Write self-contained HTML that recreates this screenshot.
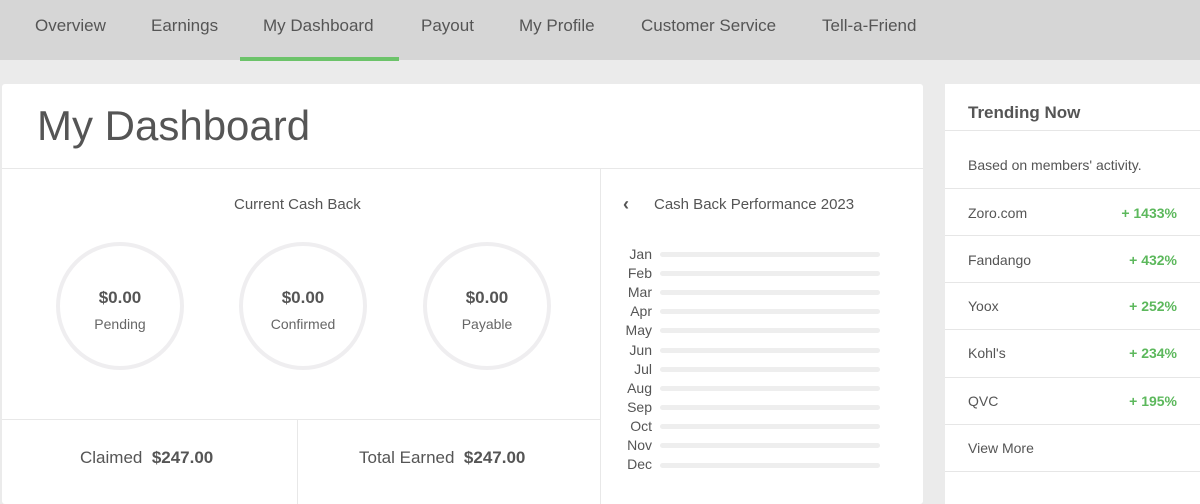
<!DOCTYPE html>
<html><head><style>
*{margin:0;padding:0;box-sizing:border-box}
body{width:1200px;height:490px;overflow:hidden;background:#ebebeb;font-family:"Liberation Sans",sans-serif;color:#555;position:relative}
.nav{position:absolute;left:0;top:0;width:1200px;height:60px;background:#d6d6d6}
.nav span{position:absolute;top:16px;font-size:17px;color:#555}
.ul{position:absolute;left:240px;top:57px;width:159px;height:4px;background:#6cc36a}
.card{position:absolute;left:2px;top:84px;width:921px;height:420px;background:#fff;border-radius:3px}
.abs{position:absolute}
.circ{position:absolute;width:128px;height:128px;border:4px solid #efeef0;border-radius:50%;text-align:center}
.circ b{display:block;margin-top:42px;font-size:17px;color:#555}
.circ i{display:block;font-style:normal;font-size:14px;margin-top:8px;color:#666}
.m{position:absolute;left:610px;width:42px;text-align:right;font-size:14px;color:#555}
.bar{position:absolute;left:660px;width:220px;height:5px;background:#eeeeee;border-radius:3px}
.side{position:absolute;left:945px;top:84px;width:260px;height:420px;background:#fff}
.row{position:absolute;left:23px;font-size:14px;color:#555}
.pct{position:absolute;right:28px;font-size:14px;color:#5cb85c;font-weight:bold}
.hl{position:absolute;left:0;width:260px;height:1px;background:#e6e6e6}
</style></head><body>
<div class="nav">
<span style="left:35px">Overview</span><span style="left:151px">Earnings</span><span style="left:263px">My Dashboard</span><span style="left:421px">Payout</span><span style="left:519px">My Profile</span><span style="left:641px">Customer Service</span><span style="left:822px">Tell-a-Friend</span>
</div>
<div class="ul"></div>
<div class="card">
<div class="abs" style="left:35px;top:18px;font-size:42px;color:#555">My Dashboard</div>
<div class="abs" style="left:0;top:84px;width:921px;height:1px;background:#e8e8e8"></div>
<div class="abs" style="left:598px;top:85px;width:1px;height:335px;background:#e8e8e8"></div>
<div class="abs" style="left:0;top:335px;width:598px;height:1px;background:#e8e8e8"></div>
<div class="abs" style="left:295px;top:336px;width:1px;height:84px;background:#e8e8e8"></div>
<div class="abs" style="left:232px;top:112px;font-size:15px;color:#555">Current Cash Back</div>
<div class="circ" style="left:54px;top:158px"><b>$0.00</b><i>Pending</i></div>
<div class="circ" style="left:237px;top:158px"><b>$0.00</b><i>Confirmed</i></div>
<div class="circ" style="left:421px;top:158px"><b>$0.00</b><i>Payable</i></div>
<div class="abs" style="left:78px;top:364px;font-size:17px;color:#555">Claimed&nbsp; <b>$247.00</b></div>
<div class="abs" style="left:357px;top:364px;font-size:17px;color:#555">Total Earned&nbsp; <b>$247.00</b></div>
<div class="abs" style="left:621px;top:110px;font-size:18px;font-weight:bold;color:#555">‹</div>
<div class="abs" style="left:652px;top:112px;font-size:15px;color:#555">Cash Back Performance 2023</div>
</div>
<div class="m" style="top:246px">Jan</div><div class="bar" style="top:252px"></div>
<div class="m" style="top:265px">Feb</div><div class="bar" style="top:271px"></div>
<div class="m" style="top:284px">Mar</div><div class="bar" style="top:290px"></div>
<div class="m" style="top:303px">Apr</div><div class="bar" style="top:309px"></div>
<div class="m" style="top:322px">May</div><div class="bar" style="top:328px"></div>
<div class="m" style="top:342px">Jun</div><div class="bar" style="top:348px"></div>
<div class="m" style="top:361px">Jul</div><div class="bar" style="top:367px"></div>
<div class="m" style="top:380px">Aug</div><div class="bar" style="top:386px"></div>
<div class="m" style="top:399px">Sep</div><div class="bar" style="top:405px"></div>
<div class="m" style="top:418px">Oct</div><div class="bar" style="top:424px"></div>
<div class="m" style="top:437px">Nov</div><div class="bar" style="top:443px"></div>
<div class="m" style="top:456px">Dec</div><div class="bar" style="top:463px"></div>
<div class="side">
<div class="row" style="top:19px;font-size:17px;font-weight:bold">Trending Now</div>
<div class="hl" style="top:46px"></div>
<div class="row" style="top:73px">Based on members' activity.</div>
<div class="hl" style="top:104px"></div>
<div class="row" style="top:121px">Zoro.com</div><div class="pct" style="top:121px">+ 1433%</div>
<div class="hl" style="top:151px"></div>
<div class="row" style="top:168px">Fandango</div><div class="pct" style="top:168px">+ 432%</div>
<div class="hl" style="top:198px"></div>
<div class="row" style="top:214px">Yoox</div><div class="pct" style="top:214px">+ 252%</div>
<div class="hl" style="top:245px"></div>
<div class="row" style="top:261px">Kohl's</div><div class="pct" style="top:261px">+ 234%</div>
<div class="hl" style="top:293px"></div>
<div class="row" style="top:309px">QVC</div><div class="pct" style="top:309px">+ 195%</div>
<div class="hl" style="top:340px"></div>
<div class="row" style="top:356px">View More</div>
<div class="hl" style="top:387px"></div>
</div>
</body></html>
